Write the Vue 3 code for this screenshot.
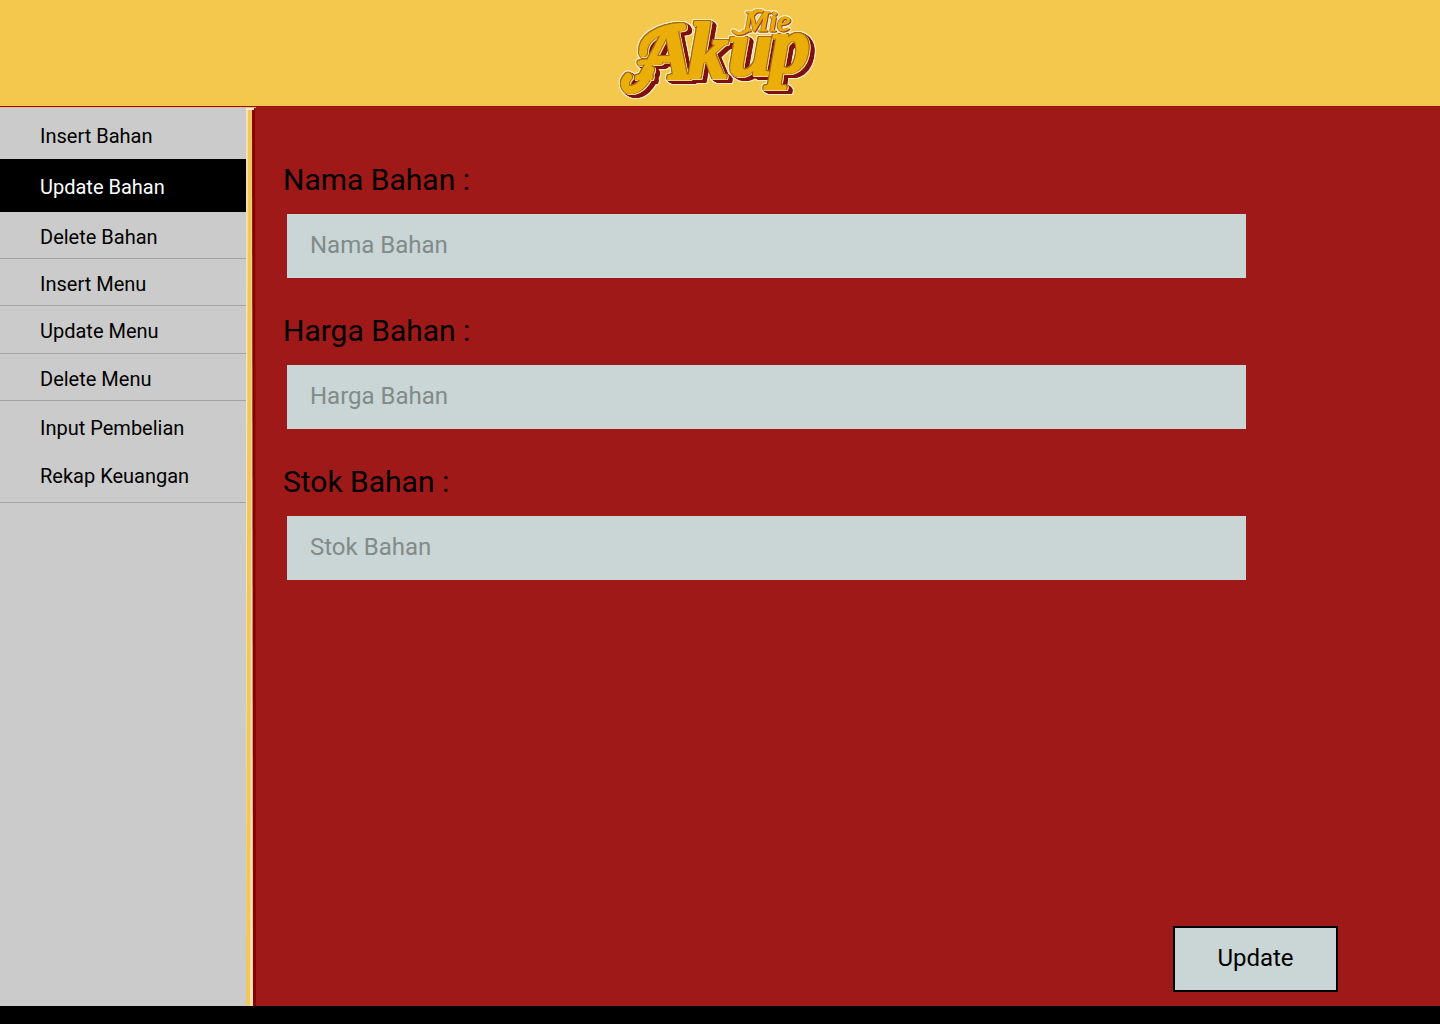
<script setup>
import { ref } from 'vue'

const menu = [
  { label: 'Insert Bahan', kind: 'tall' },
  { label: 'Update Bahan', kind: 'active' },
  { label: 'Delete Bahan', kind: 'ruled' },
  { label: 'Insert Menu', kind: 'ruled' },
  { label: 'Update Menu', kind: 'ruled wide' },
  { label: 'Delete Menu', kind: 'ruled' },
  { label: 'Input Pembelian', kind: 'plain' },
  { label: 'Rekap Keuangan', kind: 'last' },
]

const fields = ref([
  { id: 'nama', label: 'Nama Bahan', value: '' },
  { id: 'harga', label: 'Harga Bahan', value: '' },
  { id: 'stok', label: 'Stok Bahan', value: '' },
])
</script>

<template>
  <div class="page">
    <header class="banner">
      <svg class="logo" width="204" height="104" viewBox="618 0 204 104" role="img" aria-label="Mie Akup">
        <g class="word">
          <path class="swash" d="M650 70 C645 83 639 89 631 90 C624 90 623 82 628 77" />
          <path class="swash" d="M643 53 C642 40 656 28 682 27" />
          <path class="bar" d="M640 63 C645 60 652 64 660 62" />
          <text class="big" x="640 688 728 770" y="79 78 75 72">Akup</text>
        </g>
        <g class="small-word">
          <path class="tail" d="M749 29 C744 34 737 35 734 31" />
          <path class="tail" d="M752 17 C754 11 758 10 762 11" />
          <text class="small" x="744" y="31">Mie</text>
        </g>
      </svg>
    </header>

    <div class="body">
      <nav class="sidebar">
        <ul>
          <li v-for="item in menu" :key="item.label">
            <a href="#" :class="['link', item.kind]">{{ item.label }}</a>
          </li>
        </ul>
      </nav>

      <svg class="divider" viewBox="0 0 10 898" preserveAspectRatio="none" aria-hidden="true">
        <rect width="10" height="898" fill="#9e1918" />
        <path d="M6 0H9L10 898H7Z" fill="#850300" />
        <path d="M0 0H6L7 898H0Z" fill="#f7dfba" />
        <path d="M2 0H6L4 898H0Z" fill="#efc85c" />
        <rect width="8" height="2" fill="#faedcf" />
      </svg>

      <main class="panel">
        <form class="form" @submit.prevent>
          <div v-for="field in fields" :key="field.id" class="field">
            <label :for="field.id">{{ field.label }} :</label>
            <input :id="field.id" v-model="field.value" type="text" :placeholder="field.label" />
          </div>
          <button type="submit">Update</button>
        </form>
      </main>
    </div>

    <footer class="footer"></footer>
  </div>
</template>

<style>
body {
  margin: 0;
}
</style>

<style scoped>
.page {
  display: flex;
  flex-direction: column;
  min-height: 100vh;
  font-family: Roboto, "Liberation Sans", sans-serif;
  color: #000;
  background: #9e1918;
}

.banner {
  display: flex;
  justify-content: center;
  height: 106px;
  background: #f3c84d;
  border-bottom: 1px solid #8e1709;
}

.logo {
  display: block;
  overflow: visible;
}

.word {
  filter: drop-shadow(1px 0 0 #a06a18) drop-shadow(-1px 0 0 #a06a18)
    drop-shadow(0 -1px 0 #a06a18) drop-shadow(1px 1px 0 #f6d68c)
    drop-shadow(1px 1px 0 #7d1013) drop-shadow(2px 1px 0 #7d1013)
    drop-shadow(1px 1px 0 #7d1013) drop-shadow(1px 0 0 #fbeabd)
    drop-shadow(-1px 0 0 #fbeabd) drop-shadow(0 1px 0 #fbeabd)
    drop-shadow(0 -1px 0 #fbeabd);
}

.small-word {
  filter: drop-shadow(1px 1px 0 #94402c) drop-shadow(-1px 0 0 #b5782a)
    drop-shadow(1px 0 0 #fbeabd) drop-shadow(-1px 0 0 #fbeabd)
    drop-shadow(0 1px 0 #fbeabd) drop-shadow(0 -1px 0 #fbeabd);
}

.big,
.small {
  font-family: "Liberation Serif", serif;
  font-style: italic;
  fill: #ebad08;
  stroke: #ebad08;
  stroke-linejoin: round;
}

.big {
  font-size: 80px;
  font-weight: 700;
  stroke-width: 2px;
}

.small {
  font-size: 30px;
  stroke-width: 1px;
}

.swash,
.bar,
.tail {
  fill: none;
  stroke: #ebad08;
  stroke-width: 8px;
  stroke-linecap: round;
}

.bar {
  stroke-width: 5px;
}

.tail {
  stroke-width: 3px;
}

.body {
  display: flex;
  flex: 1;
}

.sidebar {
  flex: 0 0 246px;
  background: #cbcbcb;
  border-top: 1px solid #f0b283;
  box-sizing: border-box;
}

.sidebar ul {
  margin: 0;
  padding: 0;
  list-style: none;
}

.link {
  display: block;
  box-sizing: border-box;
  height: 47px;
  padding: 13px 0 0 40px;
  font-size: 20px;
  line-height: 24px;
  color: #000;
  text-decoration: none;
}

.ruled,
.last {
  border-bottom: 1px solid #a3a3a3;
}

.tall {
  height: 51px;
  padding-top: 16px;
}

.active {
  height: 53px;
  padding-top: 16px;
  color: #fff;
  background: #000;
}

.wide {
  height: 48px;
}

.plain {
  height: 48px;
  padding-top: 15px;
}

.last {
  height: 54px;
  padding-top: 15px;
}

.divider {
  flex: 0 0 10px;
  width: 10px;
  height: auto;
  align-self: stretch;
  border-top: 1px solid #f0b283;
  box-sizing: border-box;
}

.panel {
  display: flex;
  flex: 1;
  min-width: 0;
}

.form {
  display: flex;
  flex: 1;
  flex-direction: column;
  gap: 35px;
  padding: 55px 102px 14px 27px;
}

.field {
  display: flex;
  flex-direction: column;
  gap: 16px;
  margin-right: 92px;
}

label {
  font-size: 30px;
  line-height: 36px;
}

input {
  box-sizing: border-box;
  height: 64px;
  margin: 0 0 0 4px;
  padding: 0 23px 2px;
  border: 0;
  border-radius: 0;
  font-family: inherit;
  font-size: 24px;
  color: #000;
  background: #cad5d5;
}

input::placeholder {
  color: #808b8a;
  opacity: 1;
}

button {
  align-self: flex-end;
  box-sizing: border-box;
  width: 165px;
  height: 66px;
  margin-top: auto;
  padding: 0 0 2px;
  border: 2px solid #000;
  border-radius: 0;
  font-family: inherit;
  font-size: 24px;
  color: #000;
  background: #cad5d5;
}

.footer {
  height: 18px;
  background: #000;
}
</style>
